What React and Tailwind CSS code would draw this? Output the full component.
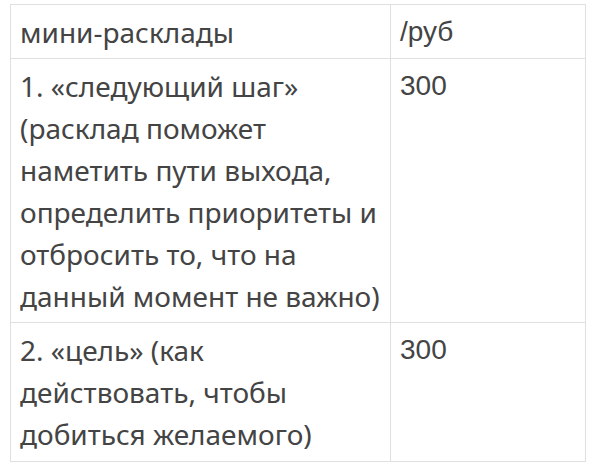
export default function App() {
  const cell = "border border-[#e0e0e0] align-top pl-[9px] pr-1 pt-[6px] pb-[5px] leading-[42px] whitespace-nowrap";
  const num = { fontFamily: '"Liberation Sans", Arial, sans-serif' };
  return (
    <div className="w-[597px] h-[470px] bg-white pt-[4px] pl-[10px]" style={{ fontFamily: '"Noto Sans", "Liberation Sans", sans-serif' }}>
      <table className="border-collapse text-[28px] text-[#444444] table-fixed w-[575px]">
        <colgroup>
          <col className="w-[380px]" />
          <col className="w-[195px]" />
        </colgroup>
        <tbody>
          <tr>
            <td className={cell}>мини-расклады</td>
            <td className={cell} style={num}>/руб</td>
          </tr>
          <tr>
            <td className={cell + " pb-[4px]"}>
              1. «следующий шаг»<br />(расклад поможет<br />наметить пути выхода,<br />определить приоритеты и<br />отбросить то, что на<br />данный момент не важно)
            </td>
            <td className={cell} style={num}>300</td>
          </tr>
          <tr>
            <td className={cell + " pb-[6px]"}>
              2. «цель» (как<br />действовать, чтобы<br />добиться желаемого)
            </td>
            <td className={cell} style={num}>300</td>
          </tr>
        </tbody>
      </table>
    </div>
  );
}
